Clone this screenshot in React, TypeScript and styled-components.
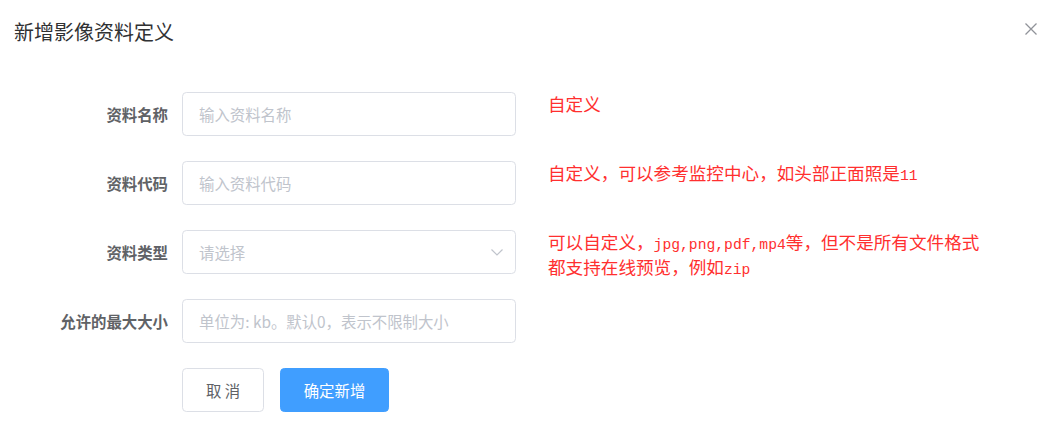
import React from "react";
import styled, { createGlobalStyle } from "styled-components";

const GlobalStyle = createGlobalStyle`
  html, body { margin: 0; padding: 0; background: #ffffff; }
  body { font-family: "Noto Sans CJK SC", "Noto Sans", sans-serif; }
  * { box-sizing: border-box; }
`;

const Dialog = styled.div`
  width: 1056px;
  height: 445px;
  background: #fff;
  display: flex;
  flex-direction: column;
`;

const Header = styled.div`
  display: flex;
  align-items: flex-start;
  justify-content: space-between;
  padding: 20px 19px 0 14px;
  height: 92px;
`;

const Title = styled.div`
  font-size: 20px;
  line-height: 24px;
  color: #303133;
`;

const CloseButton = styled.button`
  border: none;
  background: transparent;
  padding: 0;
  margin-top: 3px;
  width: 12px;
  height: 12px;
  display: flex;
  cursor: pointer;
`;

const Form = styled.div`
  display: flex;
  flex-direction: column;
  gap: 25px;
`;

const Row = styled.div`
  display: grid;
  grid-template-columns: 182px 334px 1fr;
  grid-template-rows: 44px;
  align-items: start;
`;

const Label = styled.div`
  height: 44px;
  display: flex;
  align-items: center;
  justify-content: flex-end;
  padding-right: 14px;
  font-size: 15.4px;
  font-weight: 700;
  color: #606266;
`;

const InputBox = styled.div`
  height: 44px;
  border: 1px solid #dcdfe6;
  border-radius: 4.4px;
  display: flex;
  align-items: center;
  justify-content: space-between;
  padding: 0 12px 0 16px;
  font-size: 15.4px;
  color: #c0c4cc;
`;

const Note = styled.div`
  margin-left: 32px;
  padding-top: 1px;
  font-size: 17.6px;
  line-height: 22px;
  color: #ff2f2f;
  white-space: pre-line;
`;

const Latin = styled.span`
  font-family: "Liberation Mono", monospace;
  font-size: 14.7px;
`;

const Actions = styled.div`
  display: flex;
  gap: 16px;
  padding-left: 182px;
`;

const Button = styled.button<{ $primary?: boolean }>`
  height: 44px;
  width: ${(p) => (p.$primary ? "109px" : "82px")};
  border-radius: 4.4px;
  border: 1px solid ${(p) => (p.$primary ? "#409eff" : "#dcdfe6")};
  background: ${(p) => (p.$primary ? "#409eff" : "#ffffff")};
  color: ${(p) => (p.$primary ? "#ffffff" : "#606266")};
  font-family: "Noto Sans CJK SC", sans-serif;
  font-size: 15.4px;
  padding: 0;
  cursor: pointer;
`;

const Chevron = () => (
  <svg width="12" height="7" viewBox="0 0 12 7" fill="none">
    <polyline points="0.5,0.5 6,6 11.5,0.5" stroke="#c0c4cc" strokeWidth="1.2" />
  </svg>
);

const CloseIcon = () => (
  <svg width="12" height="12" viewBox="0 0 12 12" fill="none">
    <path d="M0.5 0.5 L11.5 11.5 M11.5 0.5 L0.5 11.5" stroke="#909399" strokeWidth="1.3" />
  </svg>
);

export default function App() {
  return (
    <>
      <GlobalStyle />
      <Dialog>
        <Header>
          <Title>新增影像资料定义</Title>
          <CloseButton aria-label="close">
            <CloseIcon />
          </CloseButton>
        </Header>
        <Form>
          <Row>
            <Label>资料名称</Label>
            <InputBox>输入资料名称</InputBox>
            <Note>自定义</Note>
          </Row>
          <Row>
            <Label>资料代码</Label>
            <InputBox>输入资料代码</InputBox>
            <Note>
              自定义，可以参考监控中心，如头部正面照是<Latin>11</Latin>
            </Note>
          </Row>
          <Row>
            <Label>资料类型</Label>
            <InputBox>
              <span>请选择</span>
              <Chevron />
            </InputBox>
            <Note>
              可以自定义，<Latin>jpg,png,pdf,mp4</Latin>等，但不是所有文件格式
              {"\n"}都支持在线预览，例如<Latin>zip</Latin>
            </Note>
          </Row>
          <Row>
            <Label>允许的最大大小</Label>
            <InputBox>单位为: kb。默认0，表示不限制大小</InputBox>
            <div />
          </Row>
          <Actions>
            <Button>取 消</Button>
            <Button $primary>确定新增</Button>
          </Actions>
        </Form>
      </Dialog>
    </>
  );
}
